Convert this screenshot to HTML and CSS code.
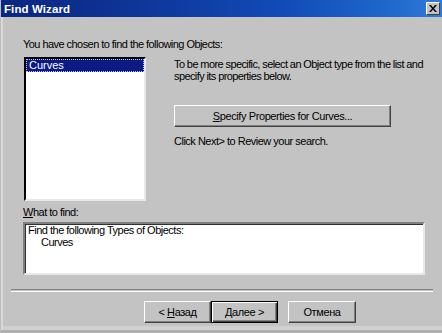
FILE: index.html
```html
<!DOCTYPE html>
<html>
<head>
<meta charset="utf-8">
<link rel="stylesheet" href="styles.css">
</head>
<body>
<div class="window">
  <div class="titlebar">
    <span class="title">Find Wizard</span>
    <span class="close"><svg width="8" height="7" viewBox="0 0 8 7"><path d="M0 0h2l2 2.5L6 0h2L5 3.5 8 7H6L4 4.5 2 7H0l3-3.5z" fill="#000"/></svg></span>
  </div>
  <div class="content">
    <div class="intro">You have chosen to find the following Objects:</div>
    <div class="main">
      <div class="listbox">
        <div class="item selected">Curves</div>
      </div>
      <div class="side">
        <div class="desc">To be more specific, select an Object type from the list and<br>specify its properties below.</div>
        <div class="btn wide"><span><u>S</u>pecify Properties for Curves...</span></div>
        <div class="hint">Click Next&gt; to Review your search.</div>
      </div>
    </div>
    <div class="label"><u>W</u>hat to find:</div>
    <div class="textbox">
      <div>Find the following Types of Objects:</div>
      <div class="indent">Curves</div>
    </div>
  </div>
  <div class="separator"></div>
  <div class="buttons">
    <div class="btn nav"><span>&lt; <u>Н</u>азад</span></div>
    <div class="btn nav default"><span>Далее &gt;</span></div>
    <div class="btn nav cancel"><span>Отмена</span></div>
  </div>
</div>
</body>
</html>
```

FILE: styles.css
```css
html, body {
  margin: 0;
  padding: 0;
  background: #c3c3c3;
}
.window {
  width: 442px;
  height: 333px;
  box-sizing: border-box;
  background: #c3c3c3;
  font-family: "Liberation Sans", Arial, sans-serif;
  font-size: 11px;
  color: #000;
  border-left: 1px solid #bdbdbd;
  border-bottom: 3px solid #b0b0b0;
  box-shadow: inset 2px 0 0 #d8d8d8, inset 0 -4px 0 #d0d0d0;
  overflow: hidden;
}
.titlebar {
  height: 17px;
  display: flex;
  align-items: center;
  justify-content: space-between;
  padding: 0 2px 0 3px;
  background: linear-gradient(to right, #0a2680 0%, #0e389c 35%, #124cb8 65%, #1f68cc 88%, #2e7ad8 100%);
}
.title {
  color: #fff;
  font-weight: bold;
  font-size: 11.5px;
  letter-spacing: 0.1px;
}
.close {
  width: 14px;
  height: 13px;
  box-sizing: border-box;
  background: #c3c3c3;
  border: 1px solid;
  border-color: #fff #404040 #404040 #fff;
  display: flex;
  align-items: center;
  justify-content: center;
}
.content {
  padding: 21px 18px 0 22px;
}
.intro {
  height: 13px;
  line-height: 13px;
  letter-spacing: -0.55px;
  white-space: nowrap;
}
.main {
  display: flex;
  margin-top: 6px;
}
.listbox {
  width: 122px;
  height: 144px;
  box-sizing: border-box;
  margin-left: 1px;
  background: #fff;
  border: 2px solid;
  border-color: #000 #e8e8e8 #e8e8e8 #000;
  padding: 0;
}
.item {
  height: 13px;
  line-height: 13px;
  padding-left: 3px;
}
.selected {
  background: #0c1a84;
  color: #fff;
  outline: 1px dotted #c0c0ff;
  outline-offset: -1px;
}
.side {
  margin-left: 28px;
  display: flex;
  flex-direction: column;
  align-items: flex-start;
}
.desc {
  line-height: 12px;
  letter-spacing: -0.6px;
  white-space: nowrap;
  margin-top: 1px;
}
.btn {
  box-sizing: border-box;
  background: #c3c3c3;
  border: 1px solid;
  border-color: #fff #404040 #404040 #fff;
  box-shadow: inset -1px -1px 0 #808080;
  display: flex;
  align-items: center;
  justify-content: center;
  letter-spacing: -0.4px;
  white-space: nowrap;
}
.wide {
  width: 217px;
  height: 22px;
  margin-top: 23px;
}
.hint {
  margin-top: 8px;
  line-height: 13px;
  letter-spacing: -0.5px;
  white-space: nowrap;
}
.label {
  margin-top: 5px;
  line-height: 13px;
  letter-spacing: -0.5px;
}
.textbox {
  margin-top: 3px;
  width: 402px;
  height: 53px;
  box-sizing: border-box;
  background: #fff;
  border: 2px solid;
  border-color: #808080 #e8e8e8 #e8e8e8 #808080;
  box-shadow: inset 1px 1px 0 #303030;
  padding: 0 3px;
  line-height: 12px;
  letter-spacing: -0.5px;
}
.indent {
  padding-left: 13px;
}
.separator {
  margin: 14px 9px 0 10px;
  height: 1px;
  border-top: 1px solid #808080;
  border-bottom: 1px solid #fff;
}
.buttons {
  display: flex;
  padding-left: 143px;
  margin-top: 9px;
}
.nav {
  width: 67px;
  height: 22px;
}
.default {
  border: 1px solid #000;
  box-shadow: inset 1px 1px 0 #fff, inset -1px -1px 0 #404040, inset -2px -2px 0 #808080;
}
.cancel {
  margin-left: 10px;
  width: 68px;
}
```
